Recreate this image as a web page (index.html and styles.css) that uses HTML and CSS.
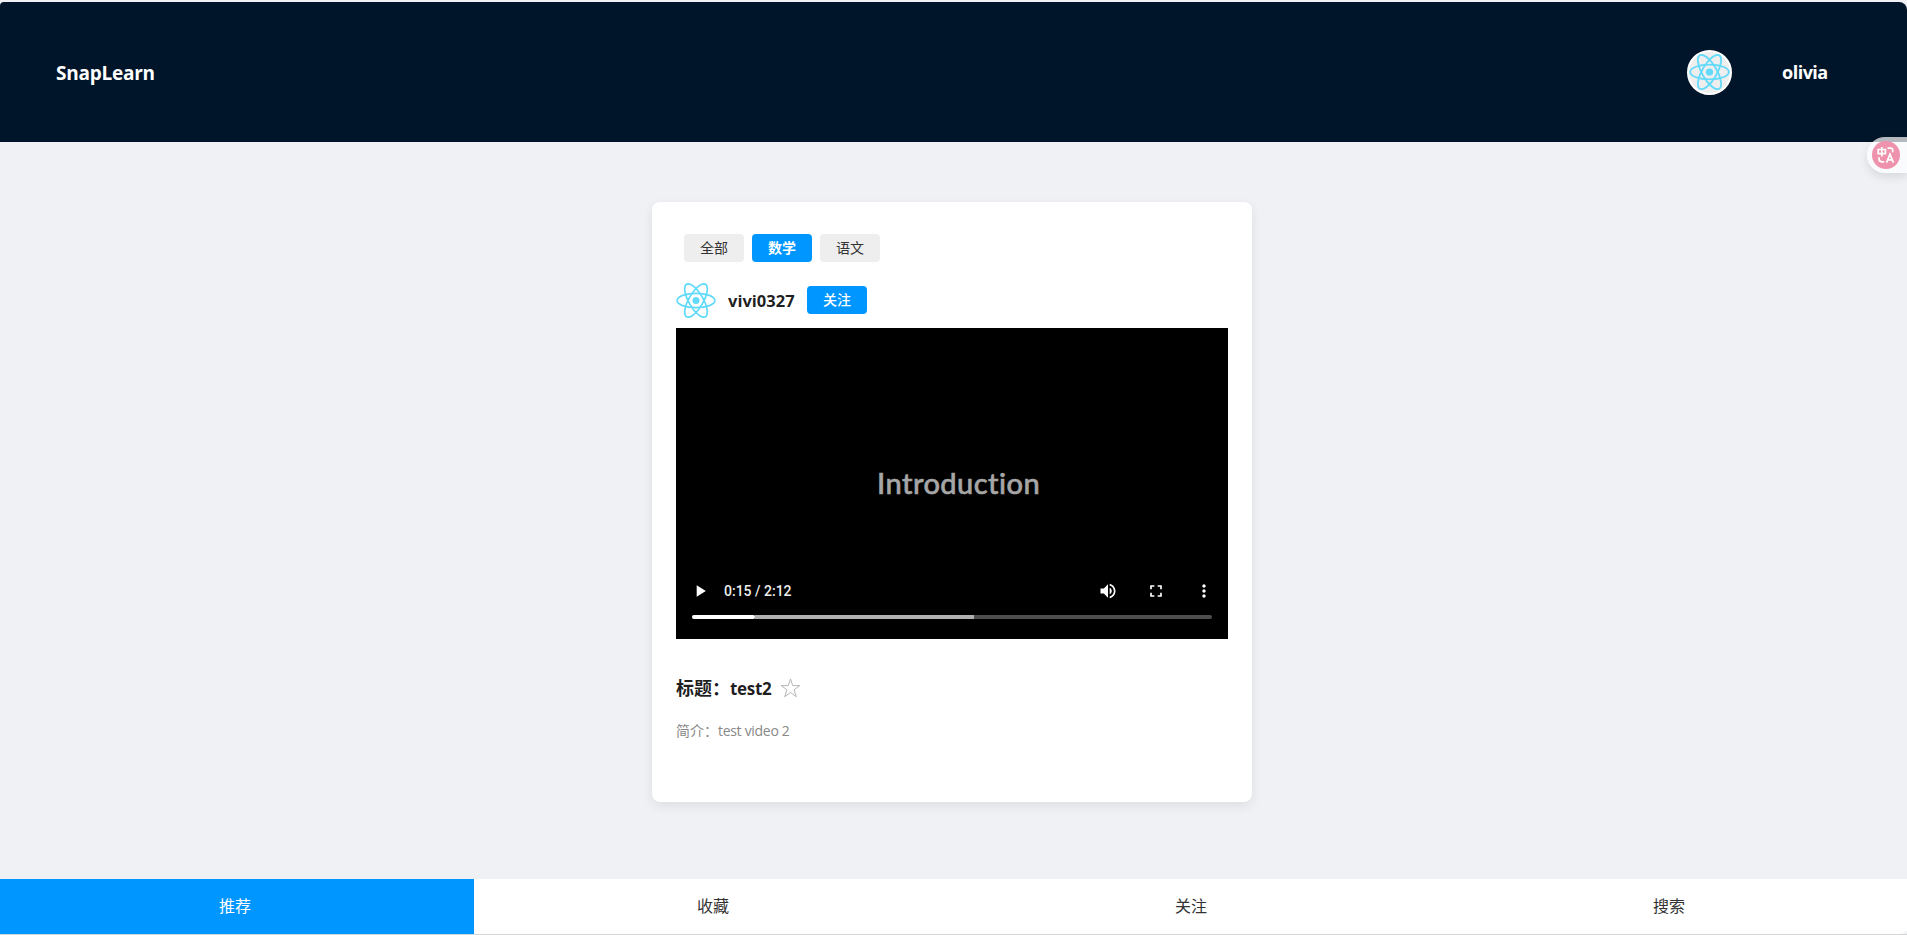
FILE: index.html
```html
<!DOCTYPE html>
<html lang="zh-CN">
<head>
<meta charset="utf-8">
<title>SnapLearn</title>
<link rel="stylesheet" href="styles.css">
</head>
<body>
<svg class="defs" aria-hidden="true"><symbol id="atom" viewBox="-11.5 -10.23 23 20.46"><circle r="2.05" fill="#61dafb"/><g fill="none" stroke="#61dafb"><ellipse rx="11" ry="4.2"/><ellipse rx="11" ry="4.2" transform="rotate(60)"/><ellipse rx="11" ry="4.2" transform="rotate(120)"/></g></symbol></svg>
<div class="page">
  <header class="header">
    <div class="brand">SnapLearn</div>
    <div class="user">
      <span class="avatar"><svg class="avatar-atom"><use href="#atom"/></svg></span>
      <span class="username">olivia</span>
    </div>
  </header>
  <main class="main">
    <section class="card">
      <div class="tabs">
        <button class="chip">全部</button>
        <button class="chip chip-active">数学</button>
        <button class="chip">语文</button>
      </div>
      <div class="author">
        <svg class="author-atom"><use href="#atom"/></svg>
        <span class="author-name">vivi0327</span>
        <button class="chip chip-follow">关注</button>
      </div>
      <div class="video">
        <div class="frame"><span class="frame-text">Introduction</span></div>
        <div class="controls">
          <svg class="icon" viewBox="0 0 24 24"><path d="M8 5v14l11-7z"/></svg>
          <span class="time">0:15 / 2:12</span>
          <svg class="icon icon-volume" viewBox="0 0 24 24"><path d="M3 9v6h4l5 5V4L7 9H3zm13.500 3c0-1.770-1.020-3.290-2.500-4.030v8.050c1.480-.73 2.500-2.250 2.500-4.020zM14 3.230v2.060c2.890.86 5 3.540 5 6.710s-2.110 5.850-5 6.710v2.060c4.010-.91 7-4.490 7-8.770s-2.990-7.860-7-8.770z"/></svg>
          <svg class="icon" viewBox="0 0 24 24"><path d="M7 14H5v5h5v-2H7v-3zm-2-4h2V7h3V5H5v5zm12 7h-3v2h5v-5h-2v3zM14 5v2h3v3h2V5h-5z"/></svg>
          <svg class="icon" viewBox="0 0 24 24"><path d="M12 8c1.100 0 2-.9 2-2s-.9-2-2-2-2 .9-2 2 .9 2 2 2zm0 2c-1.100 0-2 .9-2 2s.9 2 2 2 2-.9 2-2-.9-2-2-2zm0 6c-1.100 0-2 .9-2 2s.9 2 2 2 2-.9 2-2-.9-2-2-2z"/></svg>
        </div>
        <div class="track"><span class="played"></span><span class="buffered"></span></div>
      </div>
      <div class="title-row">
        <h2 class="title">标题：<span class="title-value">test2</span></h2>
        <svg class="star" viewBox="0 0 20 20"><path d="M10 .9l2.200 6.700h7.100l-5.700 4.200 2.200 6.900L10 14.500l-5.800 4.200 2.200-6.900L.7 7.600h7.100z"/></svg>
      </div>
      <p class="desc">简介：<span class="desc-value">test video 2</span></p>
    </section>
  </main>
  <nav class="nav">
    <a class="nav-item nav-active">推荐</a>
    <a class="nav-item">收藏</a>
    <a class="nav-item">关注</a>
    <a class="nav-item">搜索</a>
  </nav>
</div>
<div class="translate">
  <svg class="translate-icon" viewBox="0 0 28 28"><circle cx="14" cy="14" r="14" fill="#ef92ad"/><g fill="none" stroke="#fff" stroke-width="1.700"><path d="M6.200 8.500h7.200v4.200H6.200zM9.800 6v9.500M15.500 7.200h3.200q2 0 2 2v2M7 16.200v1.600q0 3 3 3h2.200M14.600 21.600l3.400-8.300 3.400 8.300M15.800 18.900h4.400"/></g></svg>
</div>
</body>
</html>
```
FILE: styles.css
```css
* { box-sizing: border-box; }
body {
  margin: 0;
  height: 935px;
  overflow: hidden;
  background: #eff1f5;
  font-family: "Open Sans", "Noto Sans CJK SC", sans-serif;
  color: rgba(0, 0, 0, .88);
}
.defs { display: none; }
.page {
  display: flex;
  flex-direction: column;
  height: 935px;
  padding-top: 2px;
  overflow: hidden;
  border-bottom: 1px solid #d3d4d6;
}
.header {
  display: flex;
  align-items: center;
  justify-content: space-between;
  flex: none;
  height: 140px;
  padding: 0 79px 0 56px;
  background: #001529;
  border-radius: 4px 8px 0 0;
  color: #fff;
  font-weight: 700;
}
.brand { padding-top: 2px; font-size: 19px; letter-spacing: -.25px; }
.user { display: flex; align-items: center; gap: 50px; }
.avatar {
  display: flex;
  align-items: center;
  justify-content: center;
  width: 45px;
  height: 45px;
  border: 2px solid #fff;
  border-radius: 50%;
  background: #eee;
}
.avatar-atom { width: 41px; height: 36px; flex: none; }
.username { font-size: 18px; width: 46px; letter-spacing: -.5px; }
.main {
  flex: 1;
  display: flex;
  justify-content: center;
  align-items: flex-start;
  padding: 60px 3px 0 0;
}
.card {
  width: 600px;
  height: 600px;
  padding: 32px 24px 0;
  background: #fff;
  border-radius: 8px;
  box-shadow: 0 4px 12px rgba(0, 0, 0, .08);
}
.tabs { display: flex; gap: 8px; padding-left: 8px; }
.chip {
  width: 60px;
  height: 28px;
  padding: 0 0 2px;
  border: 0;
  border-radius: 4px;
  background: #eee;
  color: #333;
  font: 14px/26px "Noto Sans CJK SC", sans-serif;
  text-align: center;
}
.chip-active { background: #0096ff; color: #fff; font-weight: 700; }
.chip-follow { background: #0096ff; color: #fff; font-weight: 500; }
.author { display: flex; align-items: center; height: 40px; margin-top: 18px; }
.author-atom { width: 40px; height: 35px; }
.author-name {
  width: 79px;
  padding-left: 12px;
  box-sizing: content-box;
  font-size: 16.500px;
  font-weight: 700;
}
.video {
  display: flex;
  flex-direction: column;
  height: 311px;
  margin-top: 8px;
  background: #000;
}
.frame { flex: 1; padding: 135px 0 0 201px; }
.frame-text {
  font: 500 29px/40px Lato, sans-serif;
  letter-spacing: .45px;
  -webkit-text-stroke: .6px #a6a6a6;
  color: #a6a6a6;
}
.controls {
  display: flex;
  align-items: center;
  height: 30px;
  padding: 0 14px;
}
.icon { width: 20px; height: 20px; fill: #fff; margin-left: 28px; }
.icon:first-child { margin-left: 0; }
.icon-volume { margin-left: auto; }
.time { margin-left: 14px; color: #eee; font: 500 14px/30px Roboto, sans-serif; }
.track {
  display: flex;
  flex: none;
  height: 4px;
  margin: 9px 16px 20px;
  border-radius: 2px;
  overflow: hidden;
  background: #4d4d4d;
}
.played { width: 63px; background: #fff; border-radius: 0 2px 2px 0; }
.buffered { width: 219px; background: #b0b0b0; }
.title-row { display: flex; align-items: center; height: 28px; margin-top: 35px; }
.title { margin: 0; font-size: 18px; line-height: 28px; white-space: nowrap; font-weight: 700; }
.title-value { font-size: 17px; letter-spacing: -.3px; }
.star { width: 21px; height: 20px; margin-left: 9px; fill: none; stroke: #b5b5b5; stroke-width: 1; }
.desc { margin: 18px 0 0; font-size: 14px; line-height: 22px; color: #888; }
.desc-value { letter-spacing: -.3px; }
.nav { display: flex; flex: none; width: 1912px; height: 55px; margin-left: -4px; background: #fff; border-radius: 0 0 8px 4px; }
.nav-item {
  flex: 1;
  color: #333;
  font-size: 16px;
  line-height: 54px;
  text-align: center;
}
.nav-active { background: #0096ff; color: #fff; }
.translate {
  position: absolute;
  top: 137px;
  right: 0;
  width: 40px;
  height: 36px;
  padding: 4px 0 0 5px;
  border-radius: 18px 0 0 18px;
  background: rgba(255, 255, 255, .7);
  box-shadow: 0 4px 10px rgba(0, 0, 0, .1);
}
.translate-icon { display: block; width: 28px; height: 28px; }
```
